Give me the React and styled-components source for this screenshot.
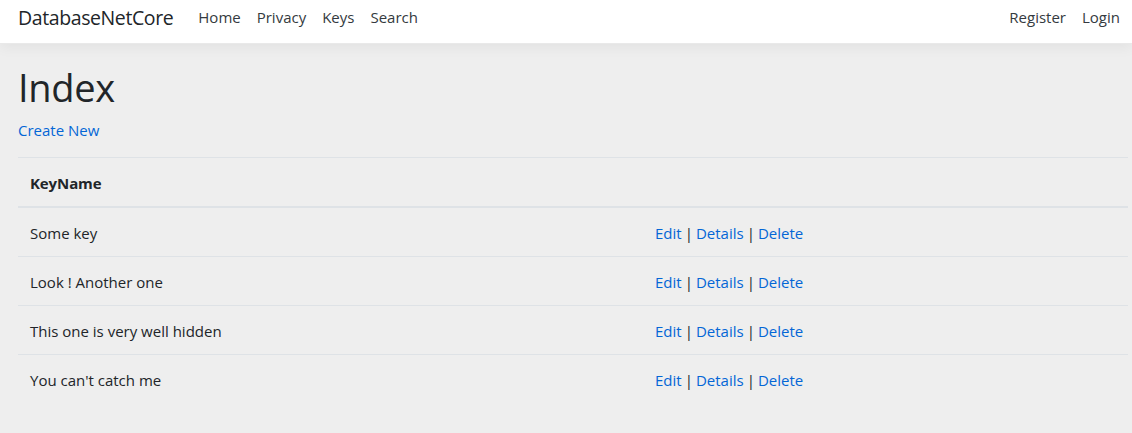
import React from 'react';
import styled, { createGlobalStyle } from 'styled-components';

const GlobalStyle = createGlobalStyle`
  html, body {
    margin: 0;
    padding: 0;
    background: #eeeeee;
    font-family: "Open Sans", "Noto Sans", sans-serif;
    font-size: 16px;
    color: #212529;
  }
`

const Nav = styled.nav`
  height: 44px;
  box-sizing: border-box;
  display: flex;
  align-items: flex-start;
  padding: 6px 4px 0 18px;
  background: #ffffff;
  border-bottom: 1px solid #e9e9e9;
  box-shadow: 0 4px 12px rgba(0, 0, 0, 0.05);
`

const Brand = styled.a`
  font-size: 19.5px;
  line-height: 23px;
  color: #212529;
  margin-right: 17px;
  letter-spacing: -0.4px;
`

const NavList = styled.div`
  display: flex;
  flex: 1;
`

const NavLink = styled.a`
  padding: 0 8px;
  line-height: 23px;
  color: #343a40;
  font-size: 15px;
`

const Main = styled.main`
  padding: 21px 4px 0 18px;
`

const Title = styled.h1`
  font-size: 38px;
  font-weight: 400;
  line-height: 1.2;
  margin: 0 0 6px;
  letter-spacing: -0.3px;
`

const Link = styled.a`
  color: #0366d6;
  font-size: 15px;
`

const Para = styled.p`
  margin: 0 0 15px;
  line-height: 24px;
  padding-top: 1px;
`

const Table = styled.table`
  width: 1110px;
  border-collapse: collapse;
`

const Th = styled.th`
  text-align: left;
  font-weight: 700;
  font-size: 15px;
  letter-spacing: -0.1px;
  padding: 13px 12px 11px;
  line-height: 24px;
  border-top: 1px solid #dee2e6;
  border-bottom: 2px solid #dee2e6;
`

const Td = styled.td`
  padding: 13px 12px 11px;
  line-height: 24px;
  font-size: 15px;
  border-top: 1px solid #dee2e6;
  width: ${p => p.w || 'auto'};
`

const Sep = styled.span`
  color: #212529;
  margin: 0 3px;
`

const keys = ['Some key', 'Look ! Another one', 'This one is very well hidden', "You can't catch me"];

export default function App() {
  return (
    <>
      <GlobalStyle />
      <Nav>
        <Brand>DatabaseNetCore</Brand>
        <NavList>
          <NavLink>Home</NavLink>
          <NavLink>Privacy</NavLink>
          <NavLink>Keys</NavLink>
          <NavLink>Search</NavLink>
        </NavList>
        <NavLink>Register</NavLink>
        <NavLink>Login</NavLink>
      </Nav>
      <Main>
        <Title>Index</Title>
        <Para><Link>Create New</Link></Para>
        <Table>
          <thead>
            <tr>
              <Th>KeyName</Th>
              <Th></Th>
            </tr>
          </thead>
          <tbody>
            {keys.map(k => (
              <tr key={k}>
                <Td w="601px">{k}</Td>
                <Td>
                  <Link>Edit</Link><Sep>|</Sep><Link>Details</Link><Sep>|</Sep><Link>Delete</Link>
                </Td>
              </tr>
            ))}
          </tbody>
        </Table>
      </Main>
    </>
  );
}
